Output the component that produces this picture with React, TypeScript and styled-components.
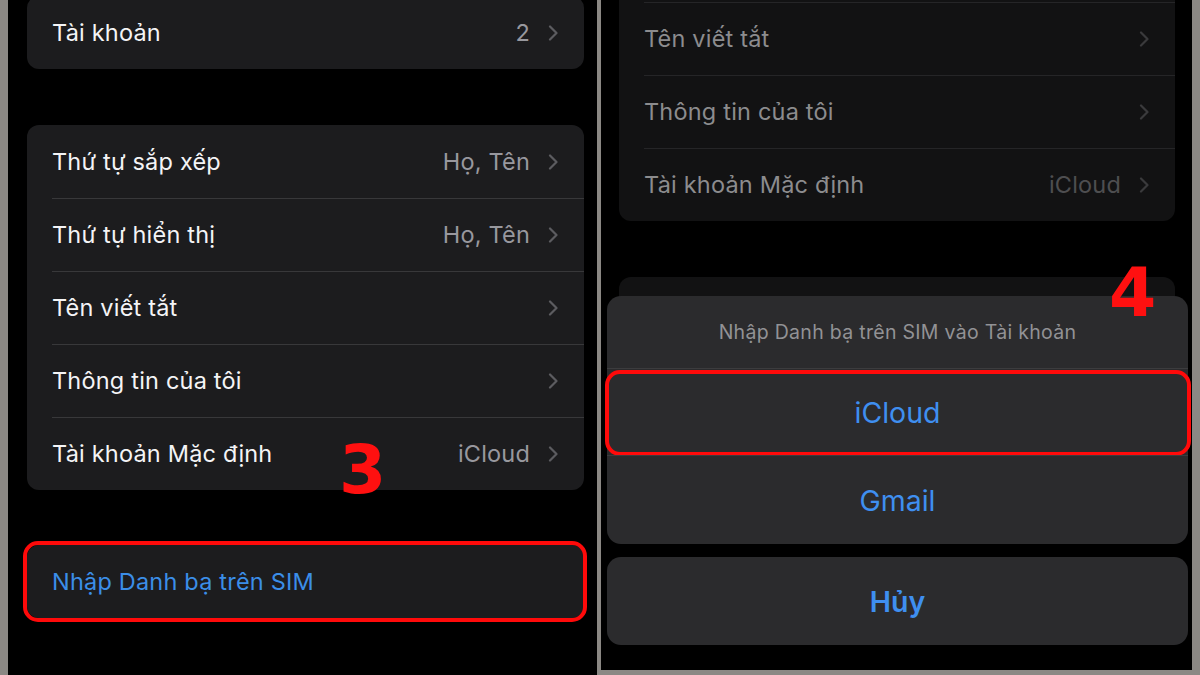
import React from "react";
import styled, { createGlobalStyle } from "styled-components";

const Global = createGlobalStyle`
  html, body { margin: 0; padding: 0; background: #8b8884; }
  body { font-family: "Inter", "Noto Sans", sans-serif; -webkit-font-smoothing: antialiased; }
  #root { width: 1200px; height: 675px; overflow: hidden; }
`;

const Frame = styled.div`
  display: flex;
  width: 1200px;
  height: 675px;
  padding-left: 8px;
  gap: 4px;
  box-sizing: border-box;
  background: #8b8884;
  align-items: flex-start;
`;

const LeftPanel = styled.div`
  position: relative;
  width: 589px;
  height: 675px;
  background: #000;
  padding: 0 13px 0 19px;
  box-sizing: border-box;
  display: flex;
  flex-direction: column;
  overflow: hidden;
`;

const RightPanel = styled.div`
  position: relative;
  width: 591px;
  height: 670px;
  background: #000;
  padding: 0 17px 0 18px;
  box-sizing: border-box;
  display: flex;
  flex-direction: column;
  overflow: hidden;
`;

const Card = styled.div<{ $dim?: boolean; $mt?: number }>`
  position: relative;
  background: ${(p) => (p.$dim ? "#121213" : "#1c1c1e")};
  border-radius: 12px;
  margin-top: ${(p) => p.$mt ?? 0}px;
  display: flex;
  flex-direction: column;
  flex-shrink: 0;
`;

const Row = styled.div<{ $dim?: boolean }>`
  position: relative;
  height: 73px;
  display: flex;
  align-items: center;
  padding: 0 26px 0 25px;
  box-sizing: border-box;
  & + &::before {
    content: "";
    position: absolute;
    top: 0;
    left: 25px;
    right: 0;
    height: 1px;
    background: ${(p) => (p.$dim ? "#252527" : "#38383a")};
  }
`;

const Label = styled.span<{ $dim?: boolean; $blue?: boolean }>`
  flex: 1;
  font-size: 23.5px;
  letter-spacing: 0.2px;
  color: ${(p) => (p.$blue ? "#3b8ee8" : p.$dim ? "#8c8c8e" : "#f4f4f6")};
`;

const Value = styled.span<{ $dim?: boolean }>`
  font-size: 23.5px;
  letter-spacing: 0.2px;
  color: ${(p) => (p.$dim ? "#4e4e50" : "#98989e")};
  margin-right: 18px;
`;

const ChevronSvg = styled.svg`
  width: 10px;
  height: 16px;
  flex-shrink: 0;
`;

const Chevron = ({ dim }: { dim?: boolean }) => (
  <ChevronSvg viewBox="0 0 10 16">
    <path
      d="M2 1.5 L8.5 8 L2 14.5"
      fill="none"
      stroke={dim ? "#3a3a3c" : "#5c5c60"}
      strokeWidth="2.2"
      strokeLinecap="round"
      strokeLinejoin="round"
    />
  </ChevronSvg>
);

const Highlight = styled.div<{ $inset: string }>`
  position: absolute;
  inset: ${(p) => p.$inset};
  border: 4px solid #ff0a0a;
  border-radius: 15px;
  pointer-events: none;
`;

const StepNumber = styled.div<{ $left: number; $top: number }>`
  position: absolute;
  left: ${(p) => p.$left}px;
  top: ${(p) => p.$top}px;
  font-family: "DejaVu Sans", "Lato", sans-serif;
  font-weight: 700;
  font-size: 68px;
  line-height: 68px;
  color: #ff1010;
`;

const Sheet = styled.div`
  position: absolute;
  left: 6px;
  right: 4px;
  top: 296px;
  display: flex;
  flex-direction: column;
  gap: 13px;
`;

const SheetGroup = styled.div`
  background: #2b2b2d;
  border-radius: 14px;
  display: flex;
  flex-direction: column;
`;

const SheetTitle = styled.div`
  height: 72px;
  display: flex;
  align-items: center;
  justify-content: center;
  font-size: 19.5px;
  letter-spacing: 0.3px;
  color: #929295;
  border-bottom: 1px solid #3c3c3e;
`;

const SheetButton = styled.div<{ $bold?: boolean; $h: number }>`
  position: relative;
  height: ${(p) => p.$h}px;
  display: flex;
  align-items: center;
  justify-content: center;
  font-size: 28.5px;
  font-weight: ${(p) => (p.$bold ? 600 : 400)};
  color: #3f8ff0;
  & + & {
    border-top: 1px solid #3c3c3e;
  }
`;

const CancelGroup = styled(SheetGroup)``;

const settings = [
  { label: "Thứ tự sắp xếp", value: "Họ, Tên" },
  { label: "Thứ tự hiển thị", value: "Họ, Tên" },
  { label: "Tên viết tắt" },
  { label: "Thông tin của tôi" },
  { label: "Tài khoản Mặc định", value: "iCloud" },
];

export default function App() {
  return (
    <>
      <Global />
      <Frame>
        <LeftPanel>
          <Card $mt={-4}>
            <Row>
              <Label>Tài khoản</Label>
              <Value>2</Value>
              <Chevron />
            </Row>
          </Card>
          <Card $mt={56}>
            {settings.map((s) => (
              <Row key={s.label}>
                <Label>{s.label}</Label>
                {s.value && <Value>{s.value}</Value>}
                <Chevron />
              </Row>
            ))}
          </Card>
          <Card $mt={55}>
            <Row>
              <Label $blue>Nhập Danh bạ trên SIM</Label>
            </Row>
            <Highlight $inset="-4px -3px -4px -4px" />
          </Card>
          <StepNumber $left={331} $top={436}>3</StepNumber>
        </LeftPanel>
        <RightPanel>
          <Card $dim $mt={-71}>
            <Row $dim />
            {settings.slice(2).map((s) => (
              <Row $dim key={s.label}>
                <Label $dim>{s.label}</Label>
                {s.value && <Value $dim>{s.value}</Value>}
                <Chevron dim />
              </Row>
            ))}
          </Card>
          <Card $dim $mt={56}>
            <Row $dim />
          </Card>
          <Sheet>
            <SheetGroup>
              <SheetTitle>Nhập Danh bạ trên SIM vào Tài khoản</SheetTitle>
              <SheetButton $h={86}>
                iCloud
                <Highlight $inset="1px -3px -1px -2px" />
              </SheetButton>
              <SheetButton $h={88}>Gmail</SheetButton>
            </SheetGroup>
            <CancelGroup>
              <SheetButton $h={88} $bold>Hủy</SheetButton>
            </CancelGroup>
          </Sheet>
          <StepNumber $left={508} $top={259}>4</StepNumber>
        </RightPanel>
      </Frame>
    </>
  );
}
